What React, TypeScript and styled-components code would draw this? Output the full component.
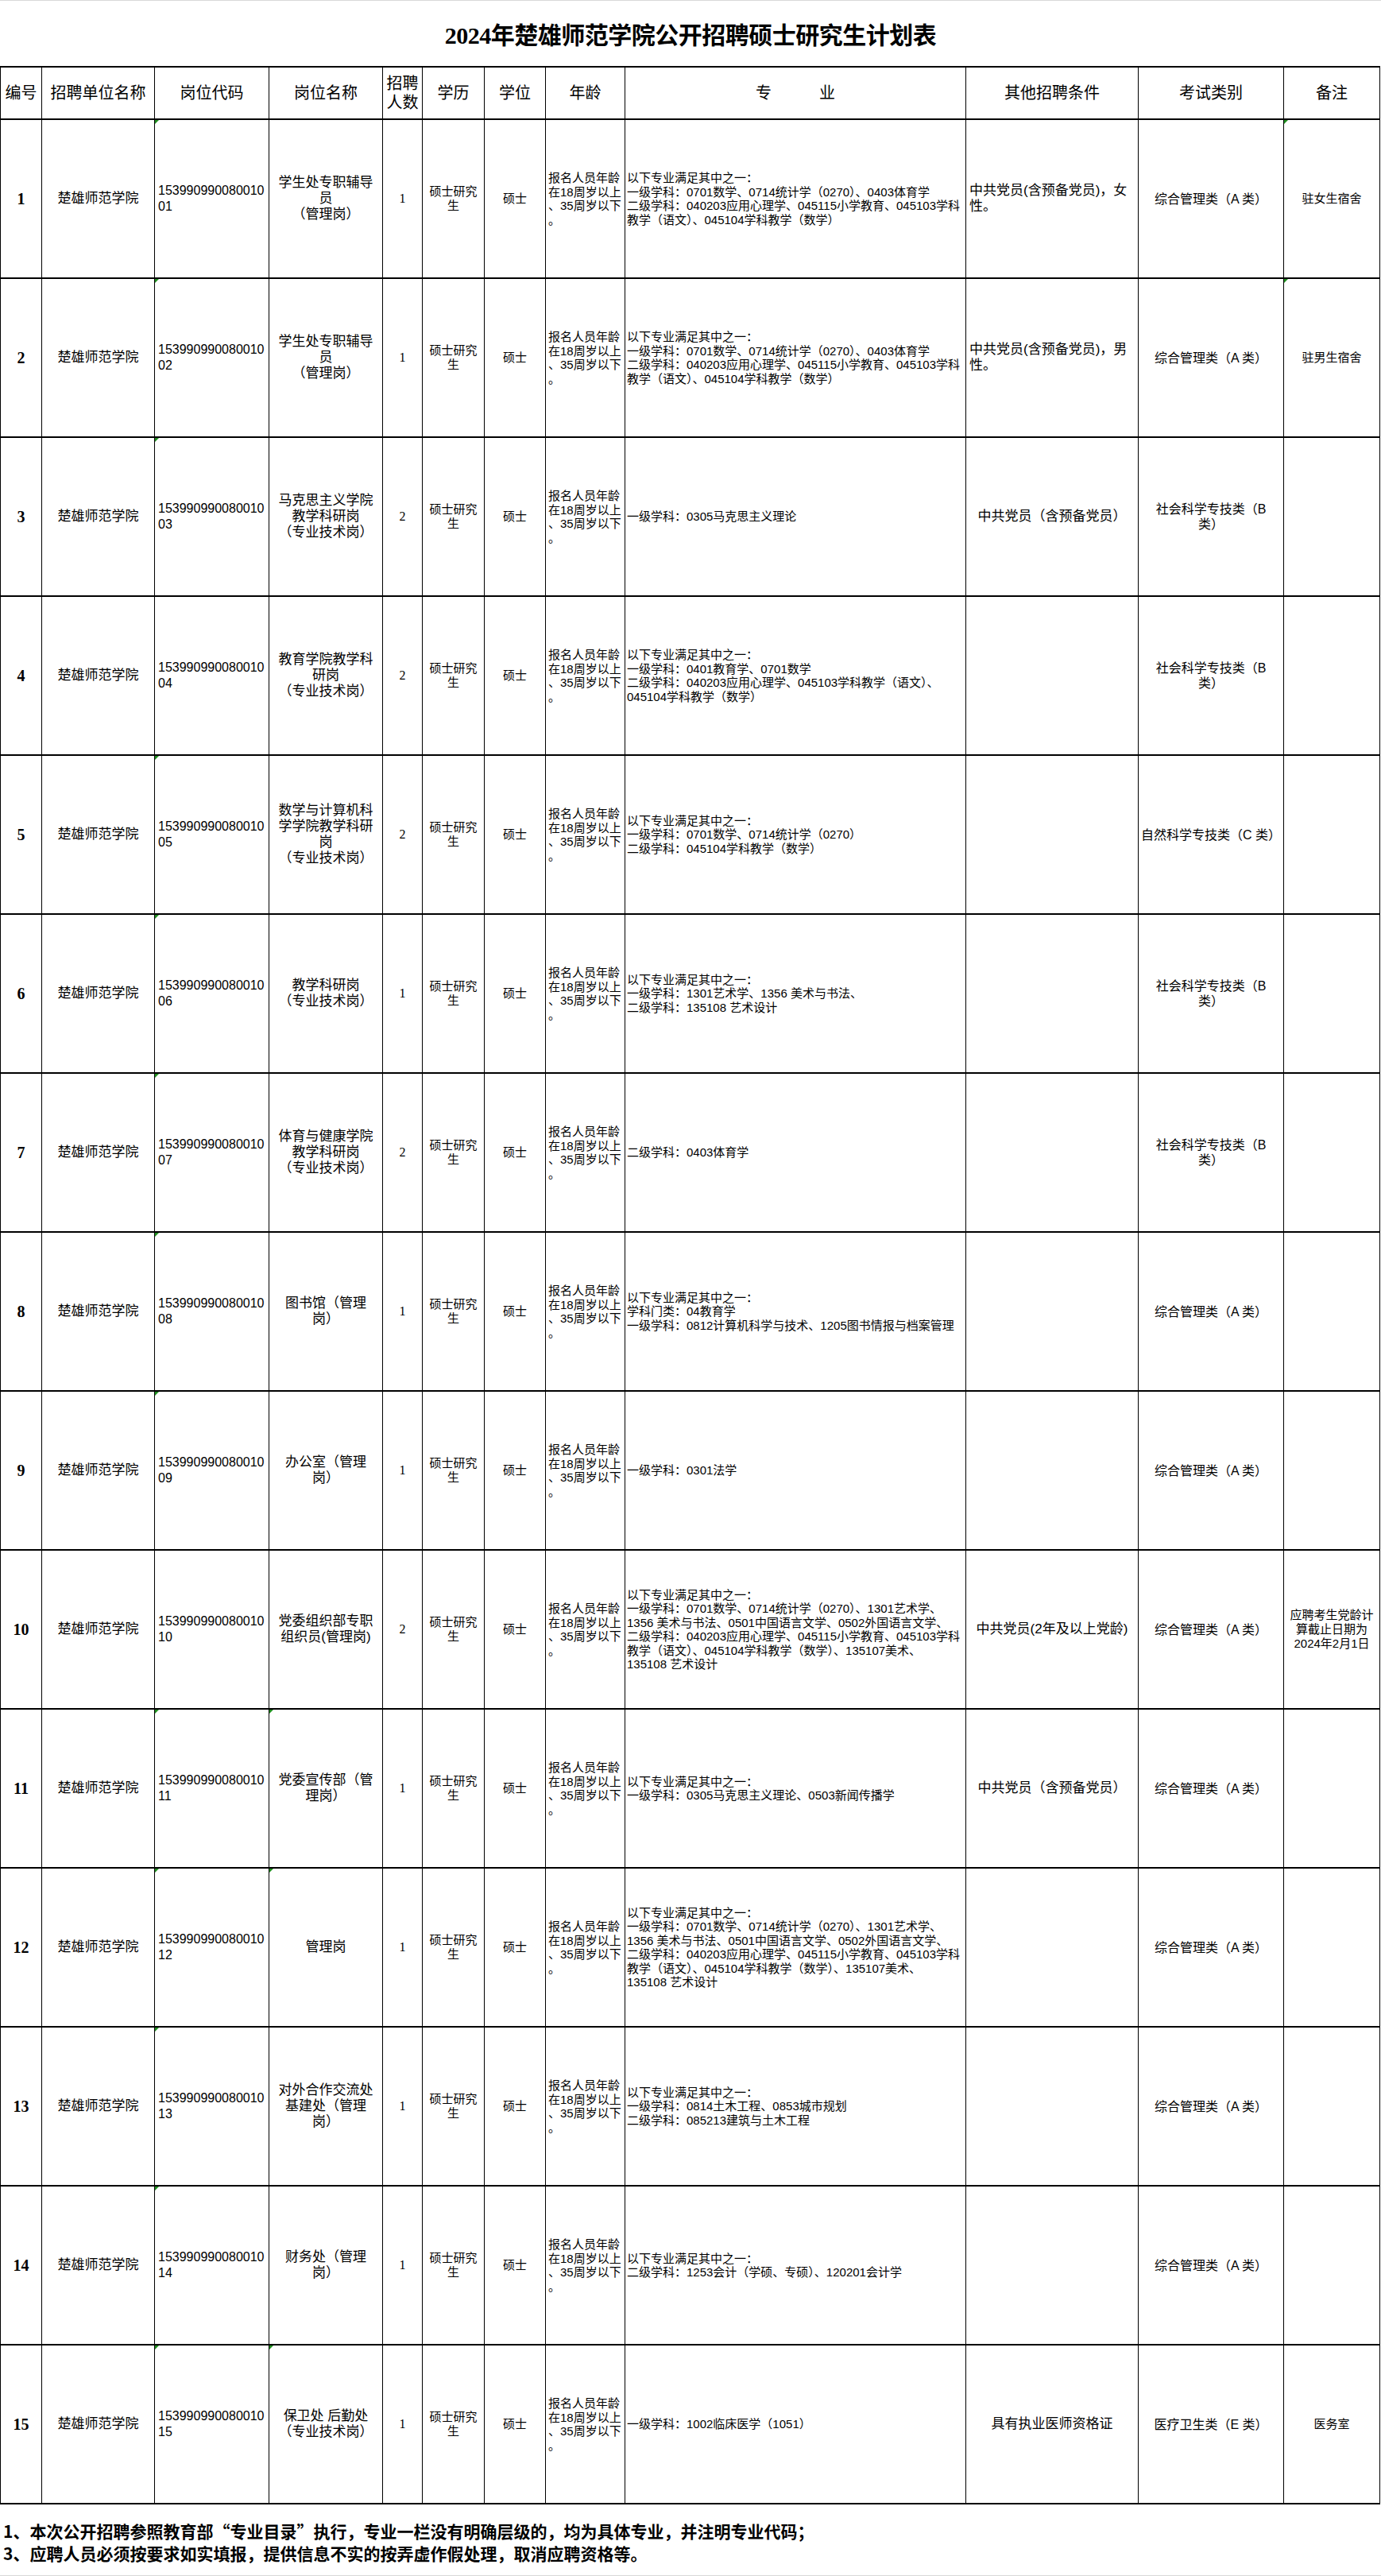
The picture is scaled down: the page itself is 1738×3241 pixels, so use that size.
import React from 'react';
import styled, { createGlobalStyle } from 'styled-components';

const GlobalStyle = createGlobalStyle`
  html, body {
    margin: 0;
    padding: 0;
    background: #ffffff;
  }
  body {
    font-family: "Liberation Sans", "Noto Sans CJK SC", sans-serif;
    color: #000000;
  }
`;

// column widths taken from the sheet
const COLS = [52, 142, 144, 143, 50, 78, 77, 100, 429, 217, 183, 121];

type Align = 'left' | 'center';

interface ColStyle {
  align: Align;
  size: number;
  lh: number;
  pad: number;
  serif?: boolean;
  bold?: boolean;
}

const COL_STYLES: ColStyle[] = [
  { align: 'center', size: 20, lh: 24, pad: 2, serif: true, bold: true },
  { align: 'center', size: 17, lh: 20, pad: 4 },
  { align: 'left', size: 16, lh: 20, pad: 4 },
  { align: 'center', size: 17, lh: 20, pad: 4 },
  { align: 'center', size: 16, lh: 20, pad: 2, serif: true },
  { align: 'center', size: 15, lh: 18, pad: 3 },
  { align: 'center', size: 15, lh: 18, pad: 3 },
  { align: 'left', size: 15, lh: 17.5, pad: 3 },
  { align: 'left', size: 15, lh: 17.5, pad: 2 },
  { align: 'center', size: 17, lh: 20, pad: 4 },
  { align: 'center', size: 16, lh: 19, pad: 4 },
  { align: 'center', size: 15, lh: 18, pad: 3 },
];

const Page = styled.div`
  width: 1738px;
  min-height: 3241px;
  box-sizing: border-box;
  border-top: 1px solid #d9d9d9;
  border-bottom: 1px solid #d9d9d9;
  background: #ffffff;
`;

const Title = styled.h1`
  margin: 0;
  height: 82px;
  display: flex;
  align-items: center;
  justify-content: center;
  font-family: "Liberation Serif", "Noto Sans CJK SC", serif;
  font-weight: 700;
  font-size: 30px;
  letter-spacing: -0.5px;
`;

const Sheet = styled.div`
  display: grid;
  width: max-content;
  grid-template-columns: ${COLS.map((c) => `${c}px`).join(' ')};
  grid-template-rows: 66px repeat(15, 200px);
  border-top: 2px solid #000000;
  border-left: 1px solid #000000;
`;

const HeadCell = styled.div`
  box-sizing: border-box;
  border-right: 1px solid #000000;
  border-bottom: 2px solid #000000;
  display: flex;
  align-items: center;
  justify-content: center;
  text-align: center;
  white-space: pre;
  font-size: 20px;
  line-height: 24px;
  padding: 0 2px;
`;

const Cell = styled.div<{ $col: ColStyle; $align?: Align; $flag?: boolean }>`
  position: relative;
  box-sizing: border-box;
  border-right: 1px solid #000000;
  border-bottom: 2px solid #000000;
  display: flex;
  align-items: center;
  justify-content: ${(p) => ((p.$align ?? p.$col.align) === 'left' ? 'flex-start' : 'center')};
  text-align: ${(p) => p.$align ?? p.$col.align};
  padding: 0 ${(p) => p.$col.pad}px;
  white-space: pre;
  overflow: hidden;
  font-size: ${(p) => p.$col.size}px;
  line-height: ${(p) => p.$col.lh}px;
  font-weight: ${(p) => (p.$col.bold ? 700 : 400)};
  font-family: ${(p) =>
    p.$col.serif
      ? '"Liberation Serif", "Noto Sans CJK SC", serif'
      : '"Liberation Sans", "Noto Sans CJK SC", sans-serif'};

  &::before {
    content: '';
    display: ${(p) => (p.$flag ? 'block' : 'none')};
    position: absolute;
    top: 0;
    left: 0;
    border-top: 5px solid #1f8f1f;
    border-right: 5px solid transparent;
  }
`;

const Notes = styled.div`
  padding: 19px 0 0 4px;
  font-family: "Noto Sans CJK SC", "Liberation Serif", sans-serif;
  font-weight: 700;
  font-size: 21px;
  line-height: 28px;
  white-space: pre;
`;

const HEADERS = [
  '编号',
  '招聘单位名称',
  '岗位代码',
  '岗位名称',
  '招聘\n人数',
  '学历',
  '学位',
  '年龄',
  '专　　　业',
  '其他招聘条件',
  '考试类别',
  '备注',
];

const AGE = '报名人员年龄\n在18周岁以上\n、35周岁以下\n。';
const EXAM_A = '综合管理类（A 类）';
const EXAM_B = '社会科学专技类（B\n类）';

const MAJOR_1 =
  '以下专业满足其中之一：\n一级学科：0701数学、0714统计学（0270）、0403体育学\n二级学科：040203应用心理学、045115小学教育、045103学科\n教学（语文）、045104学科教学（数学）';
const MAJOR_10 =
  '以下专业满足其中之一：\n一级学科：0701数学、0714统计学（0270）、1301艺术学、\n1356 美术与书法、0501中国语言文学、0502外国语言文学、\n二级学科：040203应用心理学、045115小学教育、045103学科\n教学（语文）、045104学科教学（数学）、135107美术、\n135108 艺术设计';

interface Post {
  name: string;
  count: number;
  major: string;
  other?: string;
  otherLeft?: boolean;
  exam: string;
  note?: string;
  codeFlag?: boolean;
  nameFlag?: boolean;
  noteFlag?: boolean;
}

const POSTS: Post[] = [
  {
    name: '学生处专职辅导\n员\n（管理岗）',
    count: 1,
    major: MAJOR_1,
    other: '中共党员(含预备党员)，女\n性。',
    otherLeft: true,
    exam: EXAM_A,
    note: '驻女生宿舍',
    codeFlag: true,
    noteFlag: true,
  },
  {
    name: '学生处专职辅导\n员\n（管理岗）',
    count: 1,
    major: MAJOR_1,
    other: '中共党员(含预备党员)，男\n性。',
    otherLeft: true,
    exam: EXAM_A,
    note: '驻男生宿舍',
    codeFlag: true,
    noteFlag: true,
  },
  {
    name: '马克思主义学院\n教学科研岗\n（专业技术岗）',
    count: 2,
    major: '一级学科：0305马克思主义理论',
    other: '中共党员（含预备党员）',
    exam: EXAM_B,
    codeFlag: true,
  },
  {
    name: '教育学院教学科\n研岗\n（专业技术岗）',
    count: 2,
    major:
      '以下专业满足其中之一：\n一级学科：0401教育学、0701数学\n二级学科：040203应用心理学、045103学科教学（语文）、\n045104学科教学（数学）',
    exam: EXAM_B,
  },
  {
    name: '数学与计算机科\n学学院教学科研\n岗\n（专业技术岗）',
    count: 2,
    major: '以下专业满足其中之一：\n一级学科：0701数学、0714统计学（0270）\n二级学科：045104学科教学（数学）',
    exam: '自然科学专技类（C 类）',
    codeFlag: true,
  },
  {
    name: '教学科研岗\n（专业技术岗）',
    count: 1,
    major: '以下专业满足其中之一：\n一级学科：1301艺术学、1356 美术与书法、\n二级学科：135108 艺术设计',
    exam: EXAM_B,
    codeFlag: true,
  },
  {
    name: '体育与健康学院\n教学科研岗\n（专业技术岗）',
    count: 2,
    major: '二级学科：0403体育学',
    exam: EXAM_B,
    codeFlag: true,
  },
  {
    name: '图书馆（管理\n岗）',
    count: 1,
    major: '以下专业满足其中之一：\n学科门类：04教育学\n一级学科：0812计算机科学与技术、1205图书情报与档案管理',
    exam: EXAM_A,
    codeFlag: true,
  },
  {
    name: '办公室（管理\n岗）',
    count: 1,
    major: '一级学科：0301法学',
    exam: EXAM_A,
    codeFlag: true,
  },
  {
    name: '党委组织部专职\n组织员(管理岗)',
    count: 2,
    major: MAJOR_10,
    other: '中共党员(2年及以上党龄)',
    exam: EXAM_A,
    note: '应聘考生党龄计\n算截止日期为\n2024年2月1日',
  },
  {
    name: '党委宣传部（管\n理岗）',
    count: 1,
    major: '以下专业满足其中之一：\n一级学科：0305马克思主义理论、0503新闻传播学',
    other: '中共党员（含预备党员）',
    exam: EXAM_A,
    codeFlag: true,
    nameFlag: true,
  },
  {
    name: '管理岗',
    count: 1,
    major: MAJOR_10,
    exam: EXAM_A,
    codeFlag: true,
    nameFlag: true,
  },
  {
    name: '对外合作交流处\n基建处（管理\n岗）',
    count: 1,
    major: '以下专业满足其中之一：\n一级学科：0814土木工程、0853城市规划\n二级学科：085213建筑与土木工程',
    exam: EXAM_A,
    codeFlag: true,
  },
  {
    name: '财务处（管理\n岗）',
    count: 1,
    major: '以下专业满足其中之一：\n二级学科：1253会计（学硕、专硕）、120201会计学',
    exam: EXAM_A,
    codeFlag: true,
  },
  {
    name: '保卫处 后勤处\n（专业技术岗）',
    count: 1,
    major: '一级学科：1002临床医学（1051）',
    other: '具有执业医师资格证',
    exam: '医疗卫生类（E 类）',
    note: '医务室',
    codeFlag: true,
    nameFlag: true,
  },
];

const PostRow: React.FC<{ post: Post; index: number }> = ({ post, index }) => {
  const no = index + 1;
  const code = `153990990080010\n${String(no).padStart(2, '0')}`;
  const c = COL_STYLES;
  return (
    <>
      <Cell $col={c[0]}>{no}</Cell>
      <Cell $col={c[1]}>楚雄师范学院</Cell>
      <Cell $col={c[2]} $flag={post.codeFlag}>{code}</Cell>
      <Cell $col={c[3]} $flag={post.nameFlag}>{post.name}</Cell>
      <Cell $col={c[4]}>{post.count}</Cell>
      <Cell $col={c[5]}>{'硕士研究\n生'}</Cell>
      <Cell $col={c[6]}>硕士</Cell>
      <Cell $col={c[7]}>{AGE}</Cell>
      <Cell $col={c[8]}>{post.major}</Cell>
      <Cell $col={c[9]} $align={post.otherLeft ? 'left' : undefined}>{post.other ?? ''}</Cell>
      <Cell $col={c[10]}>{post.exam}</Cell>
      <Cell $col={c[11]} $flag={post.noteFlag}>{post.note ?? ''}</Cell>
    </>
  );
};

export default function App() {
  return (
    <>
      <GlobalStyle />
      <Page>
        <Title>2024年楚雄师范学院公开招聘硕士研究生计划表</Title>
        <Sheet>
          {HEADERS.map((h) => (
            <HeadCell key={h}>{h}</HeadCell>
          ))}
          {POSTS.map((p, i) => (
            <PostRow key={i} post={p} index={i} />
          ))}
        </Sheet>
        <Notes>
          {'1、本次公开招聘参照教育部“专业目录”执行，专业一栏没有明确层级的，均为具体专业，并注明专业代码；\n3、应聘人员必须按要求如实填报，提供信息不实的按弄虚作假处理，取消应聘资格等。'}
        </Notes>
      </Page>
    </>
  );
}
